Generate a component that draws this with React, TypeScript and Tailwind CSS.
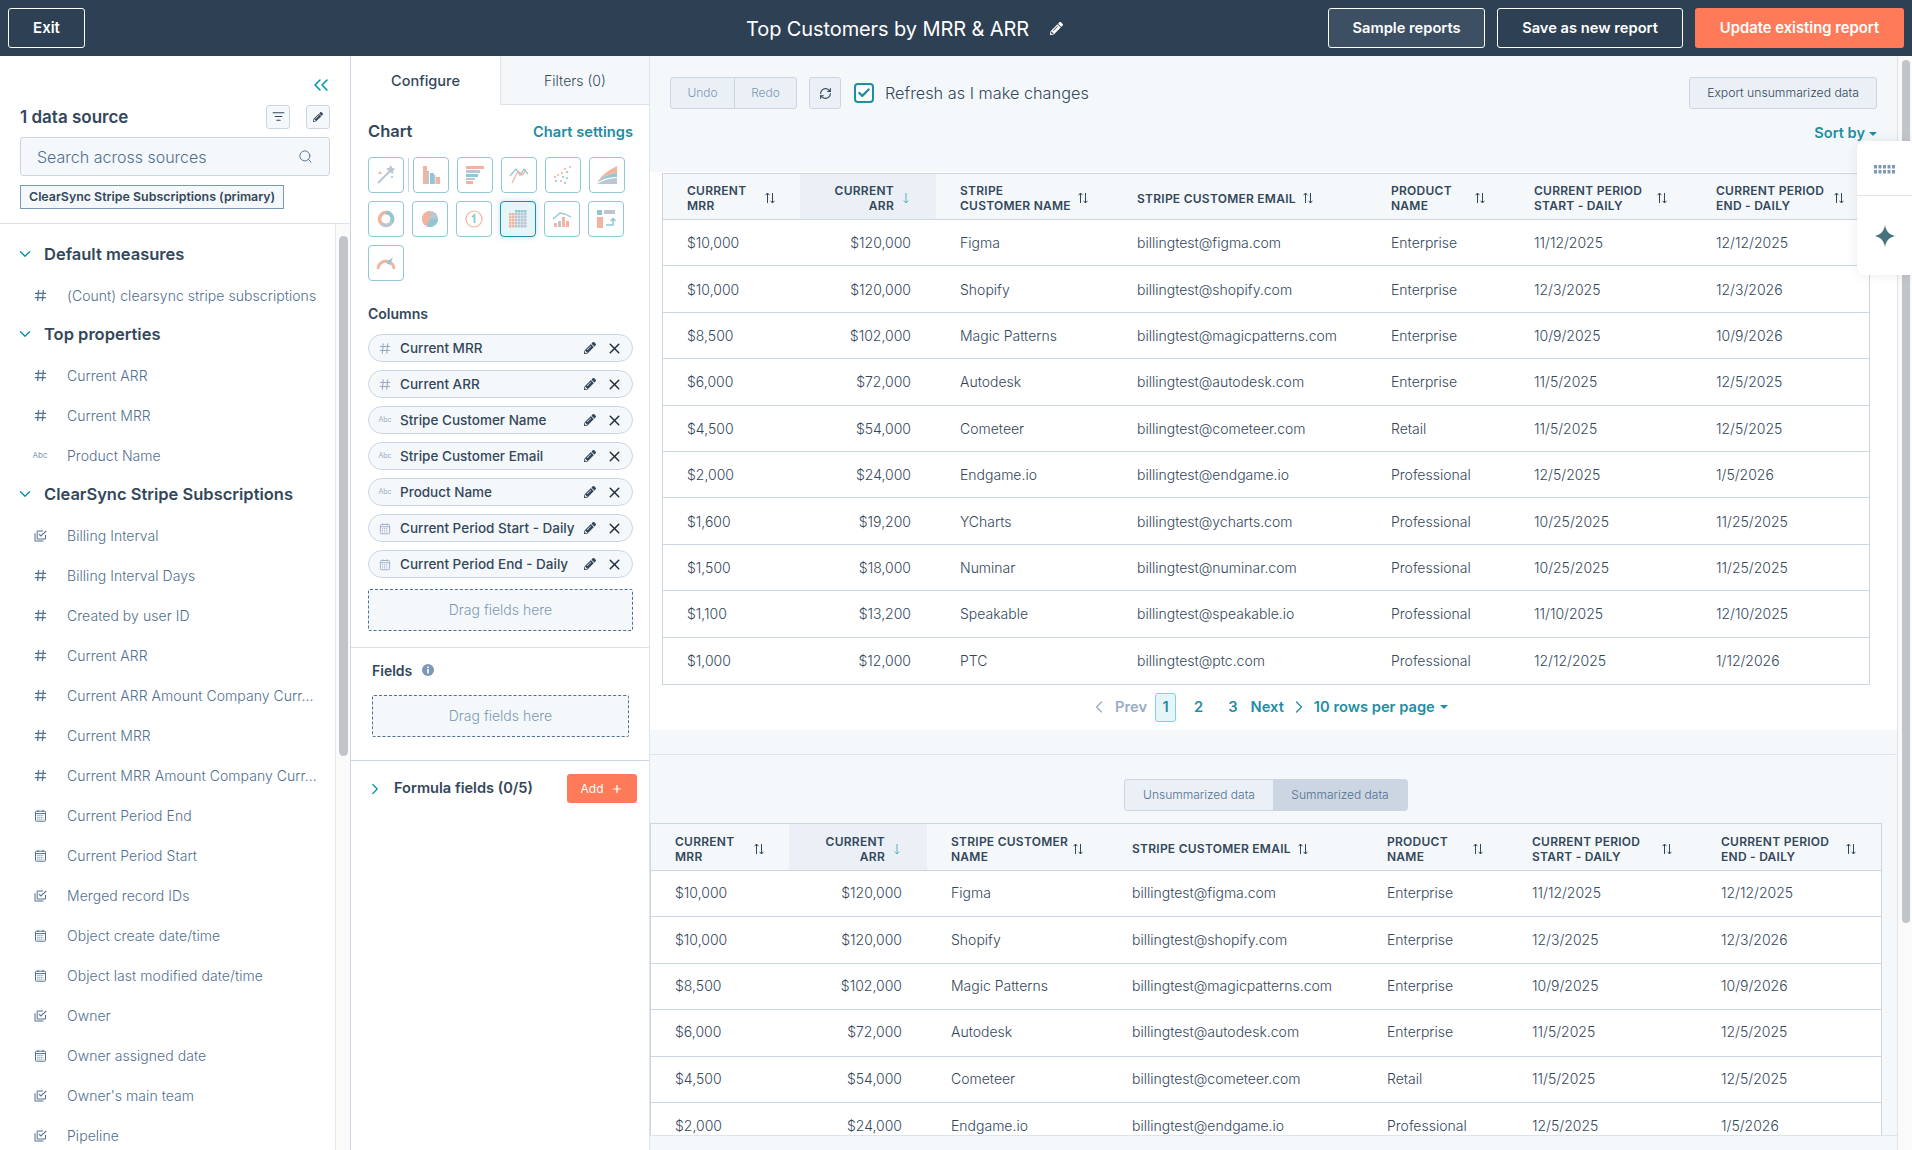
import React from "react";
import { ChevronDown, ChevronLeft, ChevronRight, ChevronsLeft, Check, ListFilter, Plus, RefreshCw, Search, X } from "lucide-react";
import { FaPencilAlt } from "react-icons/fa";

const salmon = "#f2b3a0";
const grey = "#bcc6d2";
const aqua = "#8fc8d3";

type Kind = "num" | "cal" | "enum" | "abc";

const HashIcon = ({ color = "#516f90" }: { color?: string }) => (
  <svg width="13" height="13" viewBox="0 0 13 13" fill="none" stroke={color} strokeWidth="1.2">
    <path d="M4.6 1 3.6 12M9.4 1 8.4 12M1 4.4h11M.8 8.6h11" />
  </svg>
);

const CalIcon = ({ color = "#516f90" }: { color?: string }) => (
  <svg width="13" height="13" viewBox="0 0 13 13" fill="none" stroke={color} strokeWidth="1">
    <rect x="1.5" y="2.2" width="10" height="10" rx="1" />
    <path d="M1.5 4.6h10M4 .8v2.2M9 .8v2.2" />
    <path d="M3.4 6.6h6.2M3.4 8.4h6.2M3.4 10.2h6.2" strokeDasharray="1 1" />
  </svg>
);

const EnumIcon = () => (
  <svg width="13" height="13" viewBox="0 0 13 13" fill="none" stroke="#516f90" strokeWidth="1">
    <path d="M1 4.200v7.800h8.500" />
    <path d="M11.500 6v4H3.200V2H9" />
    <path d="m5 5.200 1.800 1.800L12.400 1.800" strokeWidth="1.100" />
  </svg>
);

const AbcIcon = () => <span className="text-[8px] leading-none text-[#7c98b6]">Abc</span>;

const FieldIcon = ({ kind }: { kind: Kind }) => {
  if (kind === "num") return <HashIcon />;
  if (kind === "cal") return <CalIcon />;
  if (kind === "enum") return <EnumIcon />;
  return <AbcIcon />;
};

const SortIcon = ({ active = false }: { active?: boolean }) =>
  active ? (
    <svg width="12" height="12" viewBox="0 0 12 12" fill="none" stroke="#5fb0c0" strokeWidth="1" className="shrink-0">
      <path d="M6 1v10M3.8 8.6 6 11l2.2-2.4" />
    </svg>
  ) : (
    <svg width="12" height="12" viewBox="0 0 12 12" fill="none" stroke="#33475b" strokeWidth="1" className="shrink-0">
      <path d="M3.5 11V1M1.6 3.2 3.5 1l1.9 2.2M8.5 1v10M6.6 8.8 8.5 11l1.9-2.2" />
    </svg>
  );

const SectionHead = ({ label }: { label: string }) => (
  <div className="mb-[4px] flex h-[36px] items-center pl-[16px] pt-[2px]">
    <ChevronDown size={18} strokeWidth={1.8} className="text-[#0091ae]" />
    <span className="ml-[10px] text-[16.5px] font-semibold text-[#33475b]">{label}</span>
  </div>
);

const FieldRow = ({ kind, label }: { kind: Kind; label: string }) => (
  <div className="flex h-[40px] items-center pl-[33px]">
    <span className="flex w-[14px] justify-center">
      <FieldIcon kind={kind} />
    </span>
    <span className="ml-[20px] text-[14px] font-light tracking-[0.05px] text-[#516f90] whitespace-nowrap">{label}</span>
  </div>
);

const defaultMeasures: [Kind, string][] = [["num", "(Count) clearsync stripe subscriptions"]];
const topProperties: [Kind, string][] = [
  ["num", "Current ARR"],
  ["num", "Current MRR"],
  ["abc", "Product Name"],
];
const clearSync: [Kind, string][] = [
  ["enum", "Billing Interval"],
  ["num", "Billing Interval Days"],
  ["num", "Created by user ID"],
  ["num", "Current ARR"],
  ["num", "Current ARR Amount Company Curr..."],
  ["num", "Current MRR"],
  ["num", "Current MRR Amount Company Curr..."],
  ["cal", "Current Period End"],
  ["cal", "Current Period Start"],
  ["enum", "Merged record IDs"],
  ["cal", "Object create date/time"],
  ["cal", "Object last modified date/time"],
  ["enum", "Owner"],
  ["cal", "Owner assigned date"],
  ["enum", "Owner's main team"],
  ["enum", "Pipeline"],
];

const LeftPanel = () => (
  <div className="flex w-[350px] shrink-0 flex-col bg-white">
    <div className="h-[168px] shrink-0 border-b border-[#dfe3eb] pl-[20px] pr-[20px] pt-[20px]">
      <div className="flex h-[18px] justify-end">
        <ChevronsLeft size={24} strokeWidth={1.5} className="-mt-[3px] -mr-[3px] text-[#0091ae]" />
      </div>
      <div className="mt-[11px] flex h-[23px] items-center justify-between">
        <span className="pt-[2px] text-[17px] font-semibold text-[#33475b]">1 data source</span>
        <div className="flex gap-[16px]">
          <span className="flex h-[24px] w-[24px] items-center justify-center rounded-[3px] border border-[#cbd6e2] bg-[#f5f8fa]">
            <ListFilter size={13} className="text-[#33475b]" />
          </span>
          <span className="flex h-[24px] w-[24px] items-center justify-center rounded-[3px] border border-[#cbd6e2] bg-[#f5f8fa]">
            <FaPencilAlt size={10} className="text-[#33475b]" />
          </span>
        </div>
      </div>
      <div className="mt-[9px] flex h-[39px] items-center justify-between rounded-[3px] border border-[#cbd6e2] bg-[#f5f8fa] pl-[16px] pr-[16px]">
        <span className="text-[16px] font-light text-[#516f90]">Search across sources</span>
        <Search size={15} strokeWidth={1.5} className="text-[#516f90]" />
      </div>
      <div className="mt-[9px] inline-flex h-[24px] items-center border border-[#7c98b6] bg-[#f5f8fa] px-[8px] text-[12.4px] font-semibold text-[#33475b]">
        ClearSync Stripe Subscriptions (primary)
      </div>
    </div>
    <div className="flex min-h-0 flex-1">
      <div className="flex-1 overflow-hidden pt-[11px]">
        <SectionHead label="Default measures" />
        {defaultMeasures.map(([k, l]) => (
          <FieldRow key={l} kind={k} label={l} />
        ))}
        <SectionHead label="Top properties" />
        {topProperties.map(([k, l]) => (
          <FieldRow key={l} kind={k} label={l} />
        ))}
        <SectionHead label="ClearSync Stripe Subscriptions" />
        {clearSync.map(([k, l]) => (
          <FieldRow key={l + k} kind={k} label={l} />
        ))}
      </div>
      <div className="w-[15px] shrink-0 border-l border-[#e8e8e8] bg-[#fafafa] pl-[3px] pt-[12px]">
        <div className="h-[520px] w-[9px] rounded-full bg-[#c1c5ca]" />
      </div>
    </div>
  </div>
);

const ChartButton = ({ active = false, children }: { active?: boolean; children: React.ReactNode }) => (
  <span
    className={
      active
        ? "flex h-[36px] w-[36px] shrink-0 items-center justify-center rounded-[4px] border border-[#1f8ea3] bg-[#e5f5f8] shadow-[0_0_6px_rgba(0,145,174,0.25)]"
        : "flex h-[36px] w-[36px] shrink-0 items-center justify-center rounded-[4px] border border-[#8fc8d3] bg-white"
    }
  >
    <svg width="24" height="24" viewBox="0 0 24 24">
      {children}
    </svg>
  </span>
);

const Wand = () => (
  <>
    <path d="M4 20 15 9" stroke={grey} strokeWidth="2" />
    <path d="m17 2 1 3 3 .5-2 2.500.5 3-3-1.500-2.500 1.500.5-3L12 5.500 15 5z" fill={grey} />
    <path d="m6 8 2 3H4z" fill={salmon} />
    <circle cx="18" cy="14" r="1" fill={aqua} />
  </>
);
const Bars = () => (
  <>
    <rect x="4" y="3" width="4" height="18" fill={salmon} />
    <rect x="8" y="8" width="2" height="13" fill={grey} />
    <rect x="11" y="10" width="4" height="11" fill={aqua} />
    <rect x="15" y="12" width="1.500" height="9" fill={grey} />
    <rect x="17" y="14" width="4" height="7" fill={salmon} />
  </>
);
const HBars = () => (
  <>
    <rect x="3" y="3" width="18" height="3" fill={salmon} />
    <rect x="3" y="7" width="14" height="3" fill={grey} />
    <rect x="3" y="11" width="12" height="3" fill={aqua} />
    <rect x="3" y="15" width="9" height="2" fill={grey} />
    <rect x="3" y="18" width="7" height="3" fill={salmon} />
  </>
);
const Lines = () => (
  <>
    <path d="m3 13 6-7 4 6 4-6 4 5" fill="none" stroke={aqua} strokeWidth="1.300" />
    <path d="m5 20 6-12 4 4 2-2 2-4" fill="none" stroke={salmon} strokeWidth="1.300" />
  </>
);
const Scatter = () => (
  <g>
    {[[19, 4, salmon], [14, 6, salmon], [16, 9, aqua], [11, 10, salmon], [7, 12, salmon], [12, 14, aqua], [16, 15, aqua], [5, 18, aqua], [10, 18, salmon], [14, 20, aqua], [4, 14, salmon]].map(([x, y, c], i) => (
      <circle key={i} cx={x as number} cy={y as number} r="1.100" fill={c as string} />
    ))}
  </g>
);
const Area = () => (
  <>
    <path d="M2 20c4-7 10-12 20-17v7c-8 1-15 4-20 10z" fill={salmon} />
    <path d="M2 20c5-6 12-9 20-10v4c-8 0-15 2-20 6z" fill={aqua} />
    <path d="M2 21c5-3 12-6 20-6v6z" fill={grey} />
  </>
);
const Donut = () => (
  <>
    <circle cx="12" cy="12" r="6.500" fill="none" stroke={salmon} strokeWidth="3.500" />
    <path d="M12 5.500a6.500 6.500 0 0 1 5.600 9.800" fill="none" stroke={aqua} strokeWidth="3.500" />
    <path d="M17.600 15.300A6.500 6.500 0 0 1 8 17" fill="none" stroke={grey} strokeWidth="3.500" />
  </>
);
const Pie = () => (
  <>
    <circle cx="12" cy="12" r="8" fill={grey} />
    <path d="M12 4a8 8 0 0 0-3 15.400L12 12z" fill={salmon} />
    <path d="M12 12h8a8 8 0 0 1-11 7.400z" fill={aqua} />
  </>
);
const Single = () => (
  <>
    <circle cx="12" cy="12" r="8" fill="none" stroke={salmon} strokeWidth="1.200" />
    <path d="M10 10l2.500-2v8" fill="none" stroke={aqua} strokeWidth="1.800" />
  </>
);
const Grid = () => (
  <g>
    {[0, 1, 2, 3, 4, 5].map((r) =>
      [0, 1, 2, 3, 4, 5].map((c) =>
        r === 0 && c < 2 ? null : (
          <rect
            key={`${r}-${c}`}
            x={3 + c * 3}
            y={3 + r * 3}
            width="2.500"
            height="2.500"
            fill={r === 0 ? aqua : c < 2 ? salmon : grey}
          />
        ),
      ),
    )}
  </g>
);
const Combo = () => (
  <>
    <path d="m3 12 7-6 5 1 6 3" fill="none" stroke={aqua} strokeWidth="1.300" />
    <rect x="4" y="16" width="3" height="4" fill={salmon} />
    <rect x="8" y="14" width="3" height="6" fill={grey} />
    <rect x="12" y="10" width="3" height="10" fill={salmon} />
    <rect x="16" y="14" width="3" height="6" fill={salmon} />
  </>
);
const Pivot = () => (
  <>
    <rect x="3" y="3" width="5" height="5" fill={aqua} />
    <rect x="10" y="3" width="11" height="4" fill={grey} />
    <rect x="3" y="10" width="6" height="11" fill={salmon} />
    <path d="M12 18h7v-6M16.500 14 19 11.500 21.500 14" fill="none" stroke={aqua} strokeWidth="1.500" />
  </>
);
const Gauge = () => (
  <>
    <path d="M4 18a8 8 0 0 1 16 0" fill="none" stroke={salmon} strokeWidth="3" />
    <path d="m12 12 7-6-3 8z" fill={aqua} />
  </>
);

const Pill = ({ kind, label }: { kind: Kind; label: string }) => (
  <div className="flex h-[28px] items-center rounded-full border border-[#cbd6e2] bg-[#f5f8fa] pl-[10px] pr-[9px]">
    <span className="flex w-[12px] justify-center">
      {kind === "num" ? <HashIcon color="#99acc2" /> : kind === "cal" ? <CalIcon color="#99acc2" /> : <span className="text-[7px] text-[#99acc2]">Abc</span>}
    </span>
    <span className="ml-[9px] flex-1 pt-[1px] text-[13.5px] font-medium text-[#33475b] whitespace-nowrap">{label}</span>
    <FaPencilAlt size={12} className="text-[#33475b]" />
    <X size={17} strokeWidth={2} className="ml-[10px] text-[#1f2b38]" />
  </div>
);

const columns: [Kind, string][] = [
  ["num", "Current MRR"],
  ["num", "Current ARR"],
  ["abc", "Stripe Customer Name"],
  ["abc", "Stripe Customer Email"],
  ["abc", "Product Name"],
  ["cal", "Current Period Start - Daily"],
  ["cal", "Current Period End - Daily"],
];

const MiddlePanel = () => (
  <div className="flex w-[300px] shrink-0 flex-col border-x border-l-[#cbd6e2] border-r-[#dfe3eb] bg-white">
    <div className="flex h-[49px] shrink-0">
      <div className="flex w-[149px] items-center justify-center text-[14.5px] font-medium text-[#33475b]">Configure</div>
      <div className="flex flex-1 items-center justify-center border-b border-l border-[#dfe3eb] bg-[#f5f8fa] text-[14px] font-light text-[#33475b]">
        Filters (0)
      </div>
    </div>
    <div className="pl-[17px] pr-[16px]">
      <div className="mt-[14px] flex h-[24px] items-center justify-between">
        <span className="text-[16.5px] font-semibold text-[#33475b]">Chart</span>
        <span className="pt-[2px] text-[14.7px] font-semibold text-[#1f8ea3]">Chart settings</span>
      </div>
      <div className="mt-[14px] flex flex-col gap-[8px]">
        <div className="flex items-center">
          <ChartButton>
            <Wand />
          </ChartButton>
          <span className="mx-[4px] h-[34px] w-px bg-[#cbd6e2]" />
          <div className="flex gap-[8px]">
            <ChartButton>
              <Bars />
            </ChartButton>
            <ChartButton>
              <HBars />
            </ChartButton>
            <ChartButton>
              <Lines />
            </ChartButton>
            <ChartButton>
              <Scatter />
            </ChartButton>
            <ChartButton>
              <Area />
            </ChartButton>
          </div>
        </div>
        <div className="flex gap-[8px]">
          <ChartButton>
            <Donut />
          </ChartButton>
          <ChartButton>
            <Pie />
          </ChartButton>
          <ChartButton>
            <Single />
          </ChartButton>
          <ChartButton active>
            <Grid />
          </ChartButton>
          <ChartButton>
            <Combo />
          </ChartButton>
          <ChartButton>
            <Pivot />
          </ChartButton>
        </div>
        <div className="flex gap-[8px]">
          <ChartButton>
            <Gauge />
          </ChartButton>
        </div>
      </div>
      <div className="mt-[22px] flex h-[20px] items-center text-[14px] font-semibold text-[#33475b]">Columns</div>
      <div className="mt-[11px] flex flex-col gap-[8px]">
        {columns.map(([k, l]) => (
          <Pill key={l} kind={k} label={l} />
        ))}
      </div>
      <div className="mt-[11px] flex h-[42px] items-center justify-center rounded-[2px] border border-dashed border-[#516f90] bg-[#f5f8fa] pb-[2px] text-[14px] font-light text-[#7c98b6]">
        Drag fields here
      </div>
    </div>
    <div className="mt-[16px] border-t border-[#dfe3eb] px-[21px]">
      <div className="mt-[12px] flex h-[20px] items-center text-[14px] font-semibold text-[#33475b]">
        Fields
        <svg width="12" height="12" viewBox="0 0 12 12" className="ml-[10px]">
          <circle cx="6" cy="6" r="6" fill="#7c98b6" />
          <rect x="5.200" y="5" width="1.600" height="4.500" fill="#fff" />
          <rect x="5.200" y="2.500" width="1.600" height="1.600" fill="#fff" />
        </svg>
      </div>
      <div className="mt-[15px] flex h-[42px] w-[257px] items-center justify-center rounded-[2px] border border-dashed border-[#516f90] bg-[#f5f8fa] pb-[2px] text-[14px] font-light text-[#7c98b6]">
        Drag fields here
      </div>
    </div>
    <div className="mt-[23px] flex border-t border-[#cbd6e2] pl-[15px] pr-[12px] pt-[13px]">
      <div className="flex h-[29px] flex-1 items-center">
        <ChevronRight size={18} strokeWidth={1.6} className="text-[#0091ae]" />
        <span className="ml-[10px] text-[14.6px] font-semibold text-[#33475b]">Formula fields (0/5)</span>
      </div>
      <span className="flex h-[29px] w-[70px] items-center justify-center gap-[8px] rounded-[3px] bg-[#ff7a59] text-[12px] font-normal text-white">
        Add <Plus size={12} strokeWidth={2.4} />
      </span>
    </div>
  </div>
);

type Col = { lines: string[]; cls: string; right?: boolean; active?: boolean; tight?: boolean };

const rows = [
  ["$10,000", "$120,000", "Figma", "billingtest@figma.com", "Enterprise", "11/12/2025", "12/12/2025"],
  ["$10,000", "$120,000", "Shopify", "billingtest@shopify.com", "Enterprise", "12/3/2025", "12/3/2026"],
  ["$8,500", "$102,000", "Magic Patterns", "billingtest@magicpatterns.com", "Enterprise", "10/9/2025", "10/9/2026"],
  ["$6,000", "$72,000", "Autodesk", "billingtest@autodesk.com", "Enterprise", "11/5/2025", "12/5/2025"],
  ["$4,500", "$54,000", "Cometeer", "billingtest@cometeer.com", "Retail", "11/5/2025", "12/5/2025"],
  ["$2,000", "$24,000", "Endgame.io", "billingtest@endgame.io", "Professional", "12/5/2025", "1/5/2026"],
  ["$1,600", "$19,200", "YCharts", "billingtest@ycharts.com", "Professional", "10/25/2025", "11/25/2025"],
  ["$1,500", "$18,000", "Numinar", "billingtest@numinar.com", "Professional", "10/25/2025", "11/25/2025"],
  ["$1,100", "$13,200", "Speakable", "billingtest@speakable.io", "Professional", "11/10/2025", "12/10/2025"],
  ["$1,000", "$12,000", "PTC", "billingtest@ptc.com", "Professional", "12/12/2025", "1/12/2026"],
];

const topCols: Col[] = [
  { lines: ["CURRENT", "MRR"], cls: "w-[137px]" },
  { lines: ["CURRENT", "ARR"], cls: "w-[136px]", right: true, active: true },
  { lines: ["STRIPE", "CUSTOMER NAME"], cls: "w-[177px]" },
  { lines: ["STRIPE CUSTOMER EMAIL"], cls: "w-[254px]", tight: true },
  { lines: ["PRODUCT", "NAME"], cls: "w-[143px]" },
  { lines: ["CURRENT PERIOD", "START - DAILY"], cls: "w-[182px]" },
  { lines: ["CURRENT PERIOD", "END - DAILY"], cls: "w-[177px]" },
];

const bottomCols: Col[] = [
  { lines: ["CURRENT", "MRR"], cls: "w-[138px]" },
  { lines: ["CURRENT", "ARR"], cls: "w-[138px]", right: true, active: true },
  { lines: ["STRIPE CUSTOMER", "NAME"], cls: "w-[181px]" },
  { lines: ["STRIPE CUSTOMER EMAIL"], cls: "w-[255px]", tight: true },
  { lines: ["PRODUCT", "NAME"], cls: "w-[145px]" },
  { lines: ["CURRENT PERIOD", "START - DAILY"], cls: "w-[189px]" },
  { lines: ["CURRENT PERIOD", "END - DAILY"], cls: "w-[184px]" },
];

const DataTable = ({ cols, data, headCls, rowCls }: { cols: Col[]; data: string[][]; headCls: string; rowCls: string }) => (
  <div className="border border-[#cbd6e2] bg-white">
    <div className={`flex border-b border-[#cbd6e2] bg-[#f5f8fa] ${headCls}`}>
      {cols.map((c) => (
        <div
          key={c.lines.join(" ")}
          className={`${c.cls} flex shrink-0 items-center pl-[24px] pr-[24px] pt-[3px] ${c.tight ? "gap-[6px]" : "justify-between"} ${c.active ? "bg-[#eaf0f6]" : ""}`}
        >
          <div className={`text-[12px] font-semibold leading-[15px] tracking-[0.25px] text-[#33475b] whitespace-nowrap ${c.right ? "flex-1 pr-[6px] text-right" : ""}`}>
            {c.lines.map((l) => (
              <div key={l}>{l}</div>
            ))}
          </div>
          <SortIcon active={c.active} />
        </div>
      ))}
    </div>
    {data.map((r, i) => (
      <div key={i} className="flex h-[46.4px] border-b border-[#cbd6e2] last:border-b-0">
        {r.map((v, j) => (
          <div
            key={j}
            className={`${cols[j].cls} ${rowCls} flex shrink-0 items-center pl-[24px] text-[14px] font-light text-[#33475b] whitespace-nowrap ${cols[j].right ? "justify-end pr-[25px]" : "pr-[24px]"}`}
          >
            {v}
          </div>
        ))}
      </div>
    ))}
  </div>
);

const Caret = () => <span className="h-0 w-0 border-x-[4px] border-t-[4px] border-x-transparent border-t-[#1f8ea3]" />;

const MainPanel = () => (
  <div className="relative flex min-w-0 flex-1">
    <div className="flex w-[1248px] shrink-0 flex-col border-r border-[#dfe3eb]">
      <div className="h-[116px] shrink-0 bg-[#f5f8fa] pl-[20px] pr-[20px] pt-[21px]">
        <div className="flex h-[32px] items-center">
          <div className="flex h-[32px] w-[127px] rounded-[3px] border border-[#cbd6e2] bg-[#eaf0f6] text-[12px] font-light text-[#7c98b6]">
            <span className="flex w-[64px] items-center justify-center border-r border-[#cbd6e2]">Undo</span>
            <span className="flex flex-1 items-center justify-center">Redo</span>
          </div>
          <span className="ml-[12px] flex h-[32px] w-[32px] items-center justify-center rounded-[3px] border border-[#cbd6e2] bg-[#eaf0f6]">
            <RefreshCw size={13} strokeWidth={2} className="text-[#33475b]" />
          </span>
          <span className="ml-[13px] flex h-[20px] w-[20px] items-center justify-center rounded-[4px] border-2 border-[#1f8ea3] bg-white">
            <Check size={14} strokeWidth={4} className="text-[#1f8ea3]" />
          </span>
          <span className="ml-[11px] text-[16.3px] font-light text-[#33475b]">Refresh as I make changes</span>
          <span className="ml-auto flex h-[32px] w-[188px] items-center justify-center rounded-[3px] border border-[#cbd6e2] bg-[#eaf0f6] text-[12.2px] font-light text-[#33475b]">
            Export unsummarized data
          </span>
        </div>
        <div className="mt-[15px] flex h-[20px] items-center justify-end gap-[4px] text-[14.6px] font-semibold text-[#1f8ea3]">
          Sort by
          <Caret />
        </div>
      </div>
      <div className="h-[558px] shrink-0 bg-white pl-[12px] pt-[1px]">
        <div className="w-[1208px]">
          <DataTable cols={topCols} data={rows} headCls="h-[46px]" rowCls="" />
        </div>
        <div className="flex h-[45px] items-center pl-[427px] text-[14.7px] font-semibold text-[#1f8ea3]">
          <ChevronLeft size={20} strokeWidth={1.5} className="text-[#99acc2]" />
          <span className="ml-[6px] text-[#99acc2]">Prev</span>
          <span className="ml-[8px] flex h-[29px] w-[21px] items-center justify-center rounded-[3px] border border-[#7fd1de] bg-[#e5f5f8]">1</span>
          <span className="ml-[18px]">2</span>
          <span className="ml-[25px]">3</span>
          <span className="ml-[13px]">Next</span>
          <ChevronRight size={20} strokeWidth={1.5} className="ml-[5px]" />
          <span className="ml-[5px]">10 rows per page</span>
          <span className="ml-[5px] flex items-center">
            <Caret />
          </span>
        </div>
      </div>
      <div className="flex min-h-0 flex-1 flex-col bg-[#f5f8fa]">
        <div className="mt-[24px] border-t border-[#dfe3eb]" />
        <div className="mt-[24px] flex w-[1232px] justify-center">
          <div className="flex h-[32px] rounded-[3px] border border-[#cbd6e2] bg-[#eaf0f6] text-[12px] font-light text-[#516f90]">
            <span className="flex w-[148px] items-center justify-center">Unsummarized data</span>
            <span className="flex w-[134px] items-center justify-center bg-[#cbd6e2]">Summarized data</span>
          </div>
        </div>
        <div className="mt-[12px] h-[312px] w-[1232px] shrink-0 overflow-hidden">
          <DataTable cols={bottomCols} data={rows.slice(0, 6)} headCls="h-[47px]" rowCls="pb-[2px]" />
        </div>
        <div className="flex-1 border-t border-[#dfe3eb]" />
      </div>
    </div>
    <div className="flex-1 bg-[#fafafa] pl-[4px] pt-[4px]">
      <div className="h-[863px] w-[8px] rounded-full bg-[#c1c5ca]" />
    </div>
    <div className="absolute right-0 top-[85px] w-[55px] rounded-l-[8px] bg-white shadow-[0_0_12px_rgba(45,62,80,0.1)]">
      <div className="flex h-[55px] items-center justify-center border-b border-[#dfe3eb] pt-[2px]">
        <svg width="22" height="9" viewBox="0 0 22 9" fill="#7c98b6">
          {[0, 1, 2, 3, 4].map((i) => (
            <React.Fragment key={i}>
              <rect x={i * 4.500} y="0" width="3" height="3.500" />
              <rect x={i * 4.500} y="5" width="3" height="3.500" />
            </React.Fragment>
          ))}
        </svg>
      </div>
      <div className="flex h-[79px] items-center justify-center">
        <svg width="20" height="22" viewBox="0 0 20 22" fill="#45727f">
          <path d="M10 0c1 6 4 9.500 10 11-6 1.500-9 5-10 11-1-6-4-9.500-10-11C6 9.500 9 6 10 0z" />
        </svg>
      </div>
    </div>
  </div>
);

export default function App() {
  return (
    <div className="flex h-[1150px] w-[1912px] flex-col overflow-hidden bg-white [font-family:Inter,sans-serif]">
      <header className="relative flex h-[56px] shrink-0 items-center bg-[#2e4053] pl-[8px] pr-[8px]">
        <button className="flex h-[40px] w-[77px] items-center justify-center rounded-[3px] border border-white text-[15px] font-semibold text-white">Exit</button>
        <div className="absolute left-[746px] top-0 flex h-[56px] items-center pt-[1px] text-[20px] font-normal tracking-[-0.1px] text-white">
          Top Customers by MRR &amp; ARR
          <FaPencilAlt size={13} className="ml-[21px] text-white" />
        </div>
        <div className="ml-auto flex gap-[12px]">
          <button className="flex h-[40px] w-[157px] items-center justify-center rounded-[3px] border border-white bg-[#3d4f63] text-[14.7px] font-semibold text-white">Sample reports</button>
          <button className="flex h-[40px] w-[186px] items-center justify-center rounded-[3px] border border-white text-[14.7px] font-semibold text-white">Save as new report</button>
          <button className="flex h-[40px] w-[209px] items-center justify-center rounded-[3px] bg-[#ff7a59] text-[14.8px] font-semibold text-white">Update existing report</button>
        </div>
      </header>
      <div className="flex min-h-0 flex-1">
        <LeftPanel />
        <MiddlePanel />
        <MainPanel />
      </div>
    </div>
  );
}
